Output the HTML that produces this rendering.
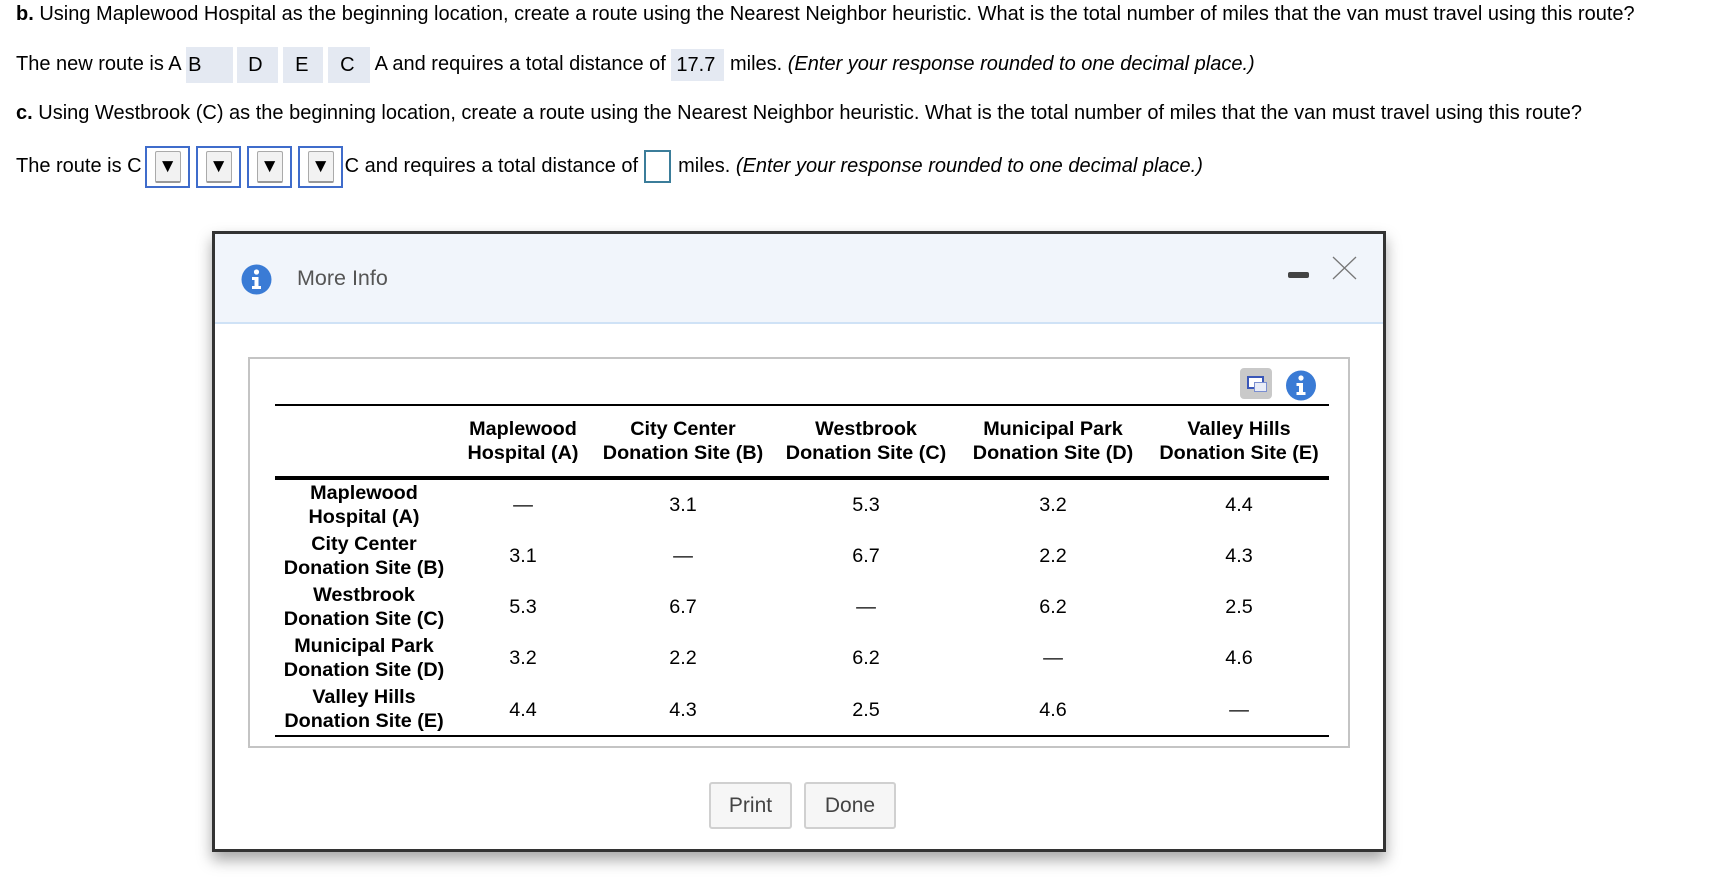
<!DOCTYPE html>
<html><head><meta charset="utf-8"><style>
body{margin:0;width:1732px;height:890px;background:#fff;font-family:"Liberation Sans",Arial,sans-serif;color:#000;position:relative;overflow:hidden}
.a{position:absolute;white-space:nowrap}
.t{font-size:20px}
.bx{display:inline-block;background:#e4e9f2;height:36px;line-height:36px;vertical-align:middle;box-sizing:border-box}
.dd{display:inline-block;vertical-align:middle;border:2px solid #3f6ccb;box-sizing:border-box;width:45px;height:42px;position:relative;margin-right:6px}
.dd i{position:absolute;left:8px;top:3px;width:26px;height:32px;background:#f2f2f2;border:1px solid #aaa;border-bottom:2px solid #999;border-radius:2px;box-sizing:border-box;font-style:normal;font-size:19px;text-align:center;line-height:30px}
.h{font-weight:bold;font-size:19.8px;text-align:center;line-height:24px;position:absolute}
.c{position:absolute;font-size:19.8px;text-align:center;width:120px}
.btn{position:absolute;top:782px;height:47px;background:#f6f6f6;border:2px solid #d0d0d0;border-radius:3px;box-sizing:border-box;font-size:21px;color:#444;text-align:center;line-height:43px}
</style></head><body>
<div class="a t" style="left:16px;top:3px"><b>b.</b> Using Maplewood Hospital as the beginning location, create a route using the Nearest Neighbor heuristic. What is the total number of miles that the van must travel using this route?</div>
<div class="a t" style="left:16px;top:46px;line-height:36px">The new route is A <span class="bx" style="width:47px;padding-left:2px">B</span><span class="bx" style="width:41px;margin-left:4px;padding-left:11px">D</span><span class="bx" style="width:40px;margin-left:5px;padding-left:12px">E</span><span class="bx" style="width:42px;margin-left:5px;padding-left:12px">C</span> A and requires a total distance of <span class="bx" style="width:53px;padding-left:5px;height:32px;line-height:32px">17.7</span> miles. <i>(Enter your response rounded to one decimal place.)</i></div>
<div class="a t" style="left:16px;top:102px"><b>c.</b> Using Westbrook (C) as the beginning location, create a route using the Nearest Neighbor heuristic. What is the total number of miles that the van must travel using this route?</div>
<div class="a t" style="left:16px;top:145px;line-height:42px">The route is C<span style="margin-left:3px"></span><span class="dd"><i>▼</i></span><span class="dd"><i>▼</i></span><span class="dd"><i>▼</i></span><span class="dd" style="margin-right:2px"><i>▼</i></span>C and requires a total distance of<span style="display:inline-block;vertical-align:middle;margin:0 7px 0 6px;width:27px;height:33px;border:2px solid #3b7d9a;box-sizing:border-box"></span>miles. <i>(Enter your response rounded to one decimal place.)</i></div>

<div class="a" style="left:212px;top:231px;width:1174px;height:621px;border:3px solid #333;box-sizing:border-box;background:#fff;box-shadow:0 8px 14px rgba(0,0,0,0.35)">
 <div style="position:absolute;left:0;top:0;right:0;height:88px;background:#f1f5fb;border-bottom:2px solid #cfe2f6"></div>
</div>
<svg class="a" style="left:241px;top:264px" width="31" height="31"><circle cx="15.5" cy="15.5" r="15" fill="#3a7bd5"/><circle cx="15.5" cy="8" r="2.6" fill="#fff"/><path d="M11 13h6.5v9h2.5v3h-9v-3h2.5v-6h-2.5z" fill="#fff"/></svg>
<div class="a" style="left:297px;top:266px;font-size:21.5px;color:#555">More Info</div>
<div class="a" style="left:1288px;top:272px;width:21px;height:6px;background:#444;border-radius:2px"></div>
<svg class="a" style="left:1332px;top:256px" width="25" height="24"><path d="M1 1L24 23M24 1L1 23" stroke="#777" stroke-width="1.3"/></svg>

<div class="a" style="left:248px;top:357px;width:1102px;height:391px;border:2px solid #c4c4c4;box-sizing:border-box"></div>
<div class="a" style="left:1240px;top:368px;width:32px;height:31px;background:#c9c9c9;border-radius:4px"><div style="position:absolute;left:7px;top:8px;width:13px;height:9px;border:2px solid #3a57b8;background:#fff"></div><div style="position:absolute;left:14px;top:14px;width:11px;height:8px;border:1px solid #7a8ed0;background:#e8ecf7"></div></div>
<svg class="a" style="left:1286px;top:370px" width="30" height="31"><circle cx="15" cy="15.5" r="15" fill="#3a7bd5"/><circle cx="15" cy="8" r="2.6" fill="#fff"/><path d="M10.5 13h6.5v9h2.5v3h-9v-3h2.5v-6h-2.5z" fill="#fff"/></svg>

<div class="a" style="left:275px;top:404px;width:1054px;height:2px;background:#000"></div>
<div class="a" style="left:275px;top:476px;width:1054px;height:4px;background:#000"></div>
<div class="a" style="left:275px;top:735px;width:1054px;height:2px;background:#000"></div>

<div class="h" style="left:443px;top:417px;width:160px">Maplewood<br>Hospital (A)</div>
<div class="h" style="left:588px;top:417px;width:190px">City Center<br>Donation Site (B)</div>
<div class="h" style="left:771px;top:417px;width:190px">Westbrook<br>Donation Site (C)</div>
<div class="h" style="left:958px;top:417px;width:190px">Municipal Park<br>Donation Site (D)</div>
<div class="h" style="left:1144px;top:417px;width:190px">Valley Hills<br>Donation Site (E)</div>

<div class="h" style="left:269px;top:481px;width:190px">Maplewood<br>Hospital (A)</div>
<div class="h" style="left:269px;top:532px;width:190px">City Center<br>Donation Site (B)</div>
<div class="h" style="left:269px;top:583px;width:190px">Westbrook<br>Donation Site (C)</div>
<div class="h" style="left:269px;top:634px;width:190px">Municipal Park<br>Donation Site (D)</div>
<div class="h" style="left:269px;top:685px;width:190px">Valley Hills<br>Donation Site (E)</div>

<div class="c" style="left:463px;top:494px">—</div><div class="c" style="left:623px;top:494px">3.1</div><div class="c" style="left:806px;top:494px">5.3</div><div class="c" style="left:993px;top:494px">3.2</div><div class="c" style="left:1179px;top:494px">4.4</div>
<div class="c" style="left:463px;top:545px">3.1</div><div class="c" style="left:623px;top:545px">—</div><div class="c" style="left:806px;top:545px">6.7</div><div class="c" style="left:993px;top:545px">2.2</div><div class="c" style="left:1179px;top:545px">4.3</div>
<div class="c" style="left:463px;top:596px">5.3</div><div class="c" style="left:623px;top:596px">6.7</div><div class="c" style="left:806px;top:596px">—</div><div class="c" style="left:993px;top:596px">6.2</div><div class="c" style="left:1179px;top:596px">2.5</div>
<div class="c" style="left:463px;top:647px">3.2</div><div class="c" style="left:623px;top:647px">2.2</div><div class="c" style="left:806px;top:647px">6.2</div><div class="c" style="left:993px;top:647px">—</div><div class="c" style="left:1179px;top:647px">4.6</div>
<div class="c" style="left:463px;top:699px">4.4</div><div class="c" style="left:623px;top:699px">4.3</div><div class="c" style="left:806px;top:699px">2.5</div><div class="c" style="left:993px;top:699px">4.6</div><div class="c" style="left:1179px;top:699px">—</div>

<div class="btn" style="left:709px;width:83px">Print</div>
<div class="btn" style="left:804px;width:92px">Done</div>
</body></html>
